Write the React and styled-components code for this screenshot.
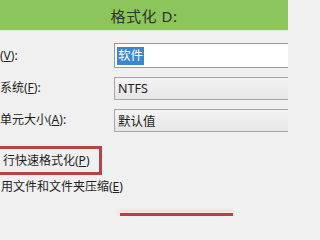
import React from "react";
import styled, { createGlobalStyle } from "styled-components";

const Global = createGlobalStyle`
  html, body {
    margin: 0;
    padding: 0;
    width: 288px;
    height: 216px;
    overflow: hidden;
    background: #f0f0f0;
  }
  body {
    font-family: "Noto Sans", "Noto Sans CJK SC", sans-serif;
    color: #1e1e1e;
  }
`;

const Dialog = styled.div`
  width: 288px;
  height: 216px;
  overflow: hidden;
  background: #f0f0f0;
  display: flex;
  flex-direction: column;
`;

const TitleBar = styled.div`
  height: 30px;
  flex: none;
  background: #8cc55b;
  border-bottom: 1px solid #dfeccf;
  display: flex;
  align-items: center;
  justify-content: center;
  font-size: 15px;
  color: #2c3526;
  letter-spacing: 0.5px;
`;

const Form = styled.div`
  display: grid;
  grid-template-columns: 114px 200px;
  grid-auto-rows: auto;
  row-gap: 8px;
  padding-top: 12px;
  align-items: center;
`;

const Label = styled.div`
  font-size: 12px;
  line-height: 16px;
  white-space: nowrap;
  padding-left: ${(p) => p.$indent || 0}px;
`;

const Key = styled.span`
  text-decoration: underline;
  text-underline-offset: 1px;
`;

const TextBox = styled.div`
  box-sizing: border-box;
  height: 25px;
  border: 1px solid #8f9aa5;
  background: #ffffff;
  display: flex;
  align-items: center;
  padding-left: 2px;
  font-size: 12.5px;
`;

const Selected = styled.span`
  background: #3e86cb;
  color: #ffffff;
  padding: 1px 1px;
  line-height: 16px;
`;

const Combo = styled.div`
  box-sizing: border-box;
  height: ${(p) => p.$h || 23}px;
  margin-top: 1px;
  border: 1px solid #a6a6a6;
  background: linear-gradient(#f3f3f3, #e6e6e6);
  display: flex;
  align-items: center;
  padding-left: 3px;
  font-size: 12.5px;
`;

const Options = styled.div`
  display: flex;
  flex-direction: column;
  padding-top: 14px;
`;

const Highlight = styled.div`
  box-sizing: border-box;
  width: 106px;
  height: 29px;
  margin-left: -4px;
  border: 3px solid #b2444b;
  display: flex;
  align-items: center;
  padding-left: 4px;
`;

const Option = styled.div`
  font-size: 12px;
  line-height: 16px;
  white-space: nowrap;
  margin-top: ${(p) => p.$mt || 0}px;
  padding-left: ${(p) => p.$indent || 0}px;
`;

const ButtonRow = styled.div`
  display: flex;
  padding-left: 120px;
  margin-top: 18px;
`;

const StartButton = styled.div`
  box-sizing: border-box;
  width: 113px;
  height: 24px;
  border: 3px solid #b2444b;
  box-shadow: 0 0 0 2px #fbe3df, 0 -2px 3px 1px #f8d6d0;
`;

export default function App() {
  return (
    <Dialog>
      <Global />
      <TitleBar>格式化 D:</TitleBar>
      <Form>
        <Label>
          (<Key>V</Key>):
        </Label>
        <TextBox>
          <Selected>软件</Selected>
        </TextBox>
        <Label>
          系统(<Key>F</Key>):
        </Label>
        <Combo $h={23}>NTFS</Combo>
        <Label>
          单元大小(<Key>A</Key>):
        </Label>
        <Combo $h={23}>默认值</Combo>
      </Form>
      <Options>
        <Highlight>
          <Option>
            行快速格式化(<Key>P</Key>)
          </Option>
        </Highlight>
        <Option $mt={4} $indent={1}>
          用文件和文件夹压缩(<Key>E</Key>)
        </Option>
      </Options>
      <ButtonRow>
        <StartButton />
      </ButtonRow>
    </Dialog>
  );
}
